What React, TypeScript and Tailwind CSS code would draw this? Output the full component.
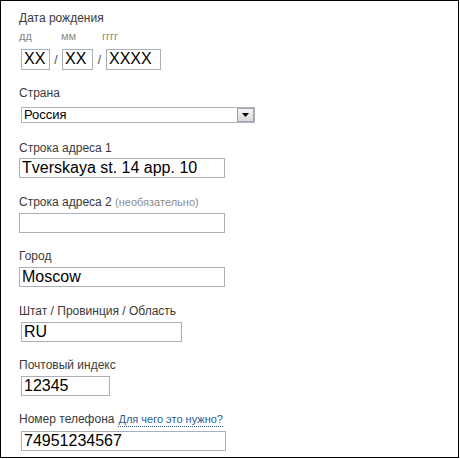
import React from 'react';

const Label = ({ children, className = '' }: { children: React.ReactNode; className?: string }) => (
    <div className={`text-[12px] leading-[14px] text-[#3a3a3a] h-[14px] ${className}`}>{children}</div>
);

const Box = ({ value, className = '' }: { value?: string; className?: string }) => (
    <div className={`h-[20px] border border-[#abb0b8] bg-white pl-[2px] text-[16px] leading-[18px] text-black whitespace-nowrap overflow-hidden ${className}`}>
        {value}
    </div>
);

export default function App() {
    return (
        <div
            className="w-[459px] h-[458px] border border-black bg-white pl-[18px] pt-[10px]"
            style={{ fontFamily: '"Liberation Sans", Arial, sans-serif' }}
        >
            {/* date of birth */}
            <Label>Дата рождения</Label>
            <div className="mt-[5px] flex h-[12px] text-[11px] leading-[12px] text-[#8a8a8a]">
                <span className="w-[42px]">дд</span>
                <span className="w-[41px]">мм</span>
                <span>гггг</span>
            </div>
            <div className="mt-[7px] ml-[2px] flex items-center">
                <Box value="XX" className="w-[29px] h-[21px] pl-[1px]" />
                <span className="w-[12px] text-center text-[12px] text-[#444]">/</span>
                <Box value="XX" className="w-[31px] h-[21px] pl-[1px]" />
                <span className="w-[13px] text-center text-[12px] text-[#444]">/</span>
                <Box value="XXXX" className="w-[55px] h-[21px] pl-[1px]" />
            </div>

            {/* country */}
            <Label className="mt-[16px]">Страна</Label>
            <div className="mt-[7px] ml-[2px] w-[234px] h-[16px] border border-[#b0b5bc] bg-white flex items-center">
                <span className="flex-1 pl-[2px] text-[13px] leading-[14px] text-black">Россия</span>
                <span className="w-[17px] h-[14px] border border-[#9ea3ab] bg-gradient-to-b from-[#f6f6f6] to-[#d9d9d9] flex items-center justify-center">
                    <svg width="7" height="4" viewBox="0 0 7 4">
                        <path d="M0 0h7L3.5 4z" fill="#000" />
                    </svg>
                </span>
            </div>

            {/* address 1 */}
            <Label className="mt-[18px]">Строка адреса 1</Label>
            <Box value="Tverskaya st. 14 app. 10" className="mt-[3px] w-[206px]" />

            {/* address 2 */}
            <Label className="mt-[17px]">
                Строка адреса 2 <span className="text-[11px] text-[#8c8c8c]">(необязательно)</span>
            </Label>
            <Box className="mt-[4px] w-[206px]" />

            {/* city */}
            <Label className="mt-[16px]">Город</Label>
            <Box value="Moscow" className="mt-[4px] w-[206px]" />

            {/* state */}
            <Label className="mt-[17px]">Штат / Провинция / Область</Label>
            <Box value="RU" className="mt-[4px] ml-[2px] w-[161px]" />

            {/* zip */}
            <Label className="mt-[16px]">Почтовый индекс</Label>
            <Box value="12345" className="mt-[4px] ml-[2px] w-[89px]" />

            {/* phone */}
            <div className="mt-[16px] flex items-baseline h-[14px]">
                <span className="text-[12px] leading-[14px] text-[#3a3a3a]">Номер телефона</span>
                <a className="ml-[4px] text-[11px] leading-[13px] text-[#2a5d8f] border-b border-dotted border-[#2a4d78]">
                    Для чего это нужно?
                </a>
            </div>
            <Box value="74951234567" className="mt-[5px] ml-[2px] w-[205px]" />
        </div>
    );
}
